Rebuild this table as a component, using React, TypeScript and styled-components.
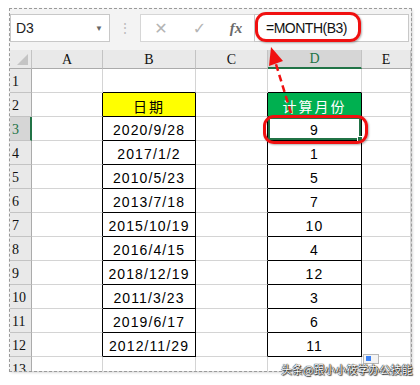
import React from "react";
import styled, { createGlobalStyle } from "styled-components";

const GlobalStyle = createGlobalStyle`
  body {
    margin: 0;
    background: #fff;
    font-family: "Liberation Sans", Arial, sans-serif;
  }
`;

const Page = styled.div`
  position: relative;
  width: 420px;
  height: 385px;
  padding: 9px 0 0 10px;
  box-sizing: border-box;
  overflow: hidden;
  background: #fff;
`;

const Frame = styled.div`
  position: relative;
  width: 401px;
  height: 362px;
  overflow: hidden;
  background: #fff;
  outline: 1px dashed #9a9a9a;
  box-shadow: 1px 1px 3px rgba(0, 0, 0, 0.25);
  display: flex;
  flex-direction: column;
`;

const FormulaBar = styled.div`
  height: 41px;
  flex: none;
  display: flex;
  align-items: flex-start;
  padding-top: 5px;
  box-sizing: border-box;
  background: #f3f3f3;
`;

const NameBox = styled.div`
  width: 100px;
  height: 28px;
  box-sizing: border-box;
  display: flex;
  align-items: center;
  justify-content: space-between;
  padding: 0 6px 0 5px;
  background: #fff;
  border: 1px solid #c8c8c8;
  font-size: 14px;
  color: #222;
`;

const Caret = styled.span`
  font-size: 8px;
  color: #666;
`;

const Grip = styled.div`
  width: 30px;
  height: 28px;
  display: flex;
  align-items: center;
  justify-content: center;
  color: #bdbdbd;
  font-size: 14px;
`;

const ToolBox = styled.div`
  height: 28px;
  display: flex;
  background: #fff;
  border: 1px solid #d6d6d6;
  border-right: none;
  box-sizing: border-box;
`;

const ToolSlot = styled.div<{ $w: number; $fx?: boolean }>`
  width: ${(p) => p.$w}px;
  display: flex;
  align-items: center;
  justify-content: center;
  color: ${(p) => (p.$fx ? "#6a6a6a" : "#b4b4b4")};
  font-family: ${(p) => (p.$fx ? `"Liberation Serif", serif` : `"DejaVu Sans", sans-serif`)};
  font-style: ${(p) => (p.$fx ? "italic" : "normal")};
  font-weight: ${(p) => (p.$fx ? "bold" : "normal")};
  font-size: ${(p) => (p.$fx ? "15px" : "16px")};
`;

const FormulaInput = styled.div`
  width: 155px;
  height: 28px;
  box-sizing: border-box;
  display: flex;
  align-items: center;
  padding-left: 11px;
  background: #fff;
  border: 1px solid #c8c8c8;
  font-size: 14px;
  letter-spacing: -0.5px;
  color: #111;
`;

const Sheet = styled.div`
  display: grid;
  grid-template-columns: 22px 71px 93px 72px 94px 1fr;
  grid-template-rows: 19px;
  grid-auto-rows: 24px;
`;

const ColHead = styled.div<{ $active?: boolean }>`
  display: flex;
  align-items: center;
  justify-content: center;
  box-sizing: border-box;
  background: ${(p) => (p.$active ? "#d6d6d6" : "#e9e9e9")};
  color: ${(p) => (p.$active ? "#217346" : "#111")};
  border-right: 1px solid #c3c3c3;
  border-bottom: ${(p) => (p.$active ? "2px solid #217346" : "1px solid #ababab")};
  font-family: "Liberation Serif", "DejaVu Serif", serif;
  font-size: 14px;
  padding-top: 1px;
`;

const Corner = styled(ColHead)`
  position: relative;
  &::after {
    content: "";
    position: absolute;
    right: 3px;
    bottom: 3px;
    border-style: solid;
    border-width: 0 0 11px 11px;
    border-color: transparent transparent #c4c4c4 transparent;
  }
`;

const RowHead = styled.div<{ $active?: boolean }>`
  display: flex;
  align-items: flex-end;
  box-sizing: border-box;
  padding: 0 0 2px 2px;
  background: ${(p) => (p.$active ? "#d6d6d6" : "#e9e9e9")};
  color: ${(p) => (p.$active ? "#217346" : "#111")};
  border-right: ${(p) => (p.$active ? "2px solid #217346" : "1px solid #ababab")};
  border-bottom: 1px solid #c3c3c3;
  font-family: "Liberation Serif", "DejaVu Serif", serif;
  font-size: 14px;
`;

const Cell = styled.div<{
  $fill?: string;
  $ink?: string;
  $edgeRight?: boolean;
  $edgeBottom?: boolean;
  $selected?: boolean;
  $cjk?: boolean;
}>`
  position: relative;
  display: flex;
  align-items: center;
  justify-content: center;
  box-sizing: border-box;
  padding-top: 2px;
  background: ${(p) => p.$fill || "#fff"};
  color: ${(p) => p.$ink || "#000"};
  border-right: 1px solid ${(p) => (p.$edgeRight ? "#000" : "#d4d4d4")};
  border-bottom: 1px solid ${(p) => (p.$edgeBottom ? "#000" : "#d4d4d4")};
  font-family: ${(p) =>
    p.$cjk ? `"Noto Sans CJK SC", sans-serif` : `"Liberation Sans", Arial, sans-serif`};
  font-size: 14px;
  letter-spacing: ${(p) => (p.$cjk ? "2px" : "1.1px")};
  box-shadow: ${(p) => (p.$selected ? "inset 0 0 0 2px #217346" : "none")};

  ${(p) =>
    p.$selected &&
    `&::after {
      content: "";
      position: absolute;
      right: -3px;
      bottom: -3px;
      width: 5px;
      height: 5px;
      background: #217346;
      border: 1px solid #fff;
    }`}
`;

const Ring = styled.div<{ $x: number; $y: number; $w: number; $h: number }>`
  position: absolute;
  left: ${(p) => p.$x}px;
  top: ${(p) => p.$y}px;
  width: ${(p) => p.$w}px;
  height: ${(p) => p.$h}px;
  box-sizing: border-box;
  border: 3px solid #f01010;
  border-radius: 11px;
  box-shadow: 1px 1px 2px rgba(0, 0, 0, 0.3);
  pointer-events: none;
`;

const ArrowLayer = styled.svg`
  position: absolute;
  left: 0;
  top: 0;
  width: 401px;
  height: 362px;
  pointer-events: none;
`;

const Watermark = styled.div`
  position: absolute;
  left: 281px;
  top: 362px;
  white-space: nowrap;
  font-family: "Noto Sans CJK SC", sans-serif;
  font-size: 11px;
  line-height: 14px;
  color: #fff;
  text-shadow: 0 0 1px #000, 0 0 1px #000, 1px 1px 1px #333;
`;

const Badge = styled.div`
  position: absolute;
  left: 363px;
  top: 354px;
  width: 16px;
  height: 10px;
  box-sizing: border-box;
  border: 1px solid #b8b8b8;
  background: #f4f4f4;
  &::before {
    content: "";
    position: absolute;
    left: 2px;
    top: 1px;
    width: 5px;
    height: 5px;
    background: #3b82f6;
  }
`;

const dates = [
  "2020/9/28",
  "2017/1/2",
  "2010/5/23",
  "2013/7/18",
  "2015/10/19",
  "2016/4/15",
  "2018/12/19",
  "2011/3/23",
  "2019/6/17",
  "2012/11/29",
];
const months = ["9", "1", "5", "7", "10", "4", "12", "3", "6", "11"];
const cols = ["A", "B", "C", "D", "E"];

export default function App() {
  const rows = Array.from({ length: 13 }, (_, i) => i + 1);

  return (
    <Page>
      <GlobalStyle />
      <Frame>
        <FormulaBar>
          <NameBox>
            D3
            <Caret>▼</Caret>
          </NameBox>
          <Grip>⋮</Grip>
          <ToolBox>
            <ToolSlot $w={40}>✕</ToolSlot>
            <ToolSlot $w={37}>✓</ToolSlot>
            <ToolSlot $w={36} $fx>
              fx
            </ToolSlot>
          </ToolBox>
          <FormulaInput>=MONTH(B3)</FormulaInput>
        </FormulaBar>

        <Sheet>
          <Corner />
          {cols.map((c) => (
            <ColHead key={c} $active={c === "D"}>
              {c}
            </ColHead>
          ))}

          {rows.map((r) => {
            const inTable = r >= 2 && r <= 12;
            const idx = r - 3;
            const bText = r === 2 ? "日期" : inTable ? dates[idx] : "";
            const dText = r === 2 ? "计算月份" : inTable ? months[idx] : "";
            return (
              <React.Fragment key={r}>
                <RowHead $active={r === 3}>{r}</RowHead>
                <Cell $edgeRight={inTable} />
                <Cell
                  $edgeRight={inTable}
                  $edgeBottom={r >= 1 && r <= 12}
                  $fill={r === 2 ? "#ffff00" : undefined}
                  $cjk={r === 2}
                >
                  {bText}
                </Cell>
                <Cell $edgeRight={inTable} />
                <Cell
                  $edgeRight={inTable}
                  $edgeBottom={r >= 1 && r <= 12}
                  $fill={r === 2 ? "#00b050" : undefined}
                  $ink={r === 2 ? "#fff" : undefined}
                  $cjk={r === 2}
                  $selected={r === 3}
                >
                  {dText}
                </Cell>
                <Cell />
              </React.Fragment>
            );
          })}
        </Sheet>

        <ArrowLayer viewBox="0 0 401 362">
          <line
            x1="281"
            y1="104"
            x2="265"
            y2="52"
            stroke="#f01010"
            strokeWidth="2.5"
            strokeDasharray="7 4"
          />
          <polygon points="261,38 259,57 273,52" fill="#f01010" />
        </ArrowLayer>

        <Ring $x={245} $y={3} $w={106} $h={30} />
        <Ring $x={253} $y={106} $w={105} $h={29} />
      </Frame>
      <Badge />
      <Watermark>头条@跟小小筱学办公技能</Watermark>
    </Page>
  );
}
